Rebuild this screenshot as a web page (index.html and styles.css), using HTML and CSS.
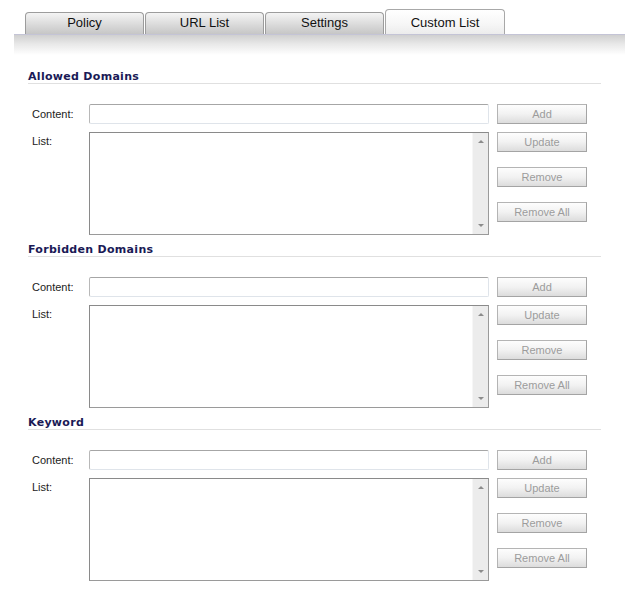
FILE: index.html
```html
<!doctype html>
<html lang="en">

<head>
    <meta charset="UTF-8">
    <title>Custom List</title>
    <link rel="stylesheet" href="styles.css">
</head>

<body>

    <div class="tabs">
        <div class="tab">Policy</div>
        <div class="tab">URL List</div>
        <div class="tab">Settings</div>
        <div class="tab active">Custom List</div>
    </div>
    <div class="band"></div>

    <div class="content">

        <div class="section">
            <h3 class="heading">Allowed Domains</h3>
            <div class="row">
                <label class="label mid">Content:</label>
                <div class="field"></div>
                <div class="side"><div class="btn">Add</div></div>
            </div>
            <div class="row list-row">
                <label class="label">List:</label>
                <div class="listbox">
                    <div class="list-area"></div>
                    <div class="scroll"><span class="arrow up"></span><span class="arrow down"></span></div>
                </div>
                <div class="side btns">
                    <div class="btn">Update</div>
                    <div class="btn">Remove</div>
                    <div class="btn">Remove All</div>
                </div>
            </div>
        </div>

        <div class="section">
            <h3 class="heading">Forbidden Domains</h3>
            <div class="row">
                <label class="label mid">Content:</label>
                <div class="field"></div>
                <div class="side"><div class="btn">Add</div></div>
            </div>
            <div class="row list-row">
                <label class="label">List:</label>
                <div class="listbox">
                    <div class="list-area"></div>
                    <div class="scroll"><span class="arrow up"></span><span class="arrow down"></span></div>
                </div>
                <div class="side btns">
                    <div class="btn">Update</div>
                    <div class="btn">Remove</div>
                    <div class="btn">Remove All</div>
                </div>
            </div>
        </div>

        <div class="section">
            <h3 class="heading">Keyword</h3>
            <div class="row">
                <label class="label mid">Content:</label>
                <div class="field"></div>
                <div class="side"><div class="btn">Add</div></div>
            </div>
            <div class="row list-row">
                <label class="label">List:</label>
                <div class="listbox">
                    <div class="list-area"></div>
                    <div class="scroll"><span class="arrow up"></span><span class="arrow down"></span></div>
                </div>
                <div class="side btns">
                    <div class="btn">Update</div>
                    <div class="btn">Remove</div>
                    <div class="btn">Remove All</div>
                </div>
            </div>
        </div>

    </div>

</body>

</html>
```

FILE: styles.css
```css
body {
    margin: 0;
    background: #fff;
    font-family: "Liberation Sans", Arial, sans-serif;
}

.tabs {
    display: flex;
    align-items: flex-end;
    gap: 1px;
    height: 34px;
    padding-left: 25px;
}

.tab {
    box-sizing: border-box;
    width: 119px;
    height: 22px;
    padding-bottom: 3px;
    line-height: 19px;
    font-size: 13px;
    text-align: center;
    color: #111;
    border: 1px solid #9c9c9c;
    border-bottom: none;
    border-radius: 4px 4px 0 0;
    background: linear-gradient(#f4f4f4, #d8d8d8 60%, #c6c6c6);
}

.tab.active {
    width: 120px;
    height: 25px;
    padding-top: 3px;
    border-color: #a8a8a8;
    background: linear-gradient(#ffffff, #f6f6f6 60%, #ececec);
}

.band {
    margin-left: 14px;
    height: 20px;
    border-top: 1px solid #c4c4d6;
    background: linear-gradient(#d0d0d0, #e8e8e8 45%, #ffffff);
}

.content {
    padding: 13px 0 0 28px;
    width: 573px;
}

.section {
    margin-bottom: 6px;
}

.heading {
    margin: 0 0 20px;
    padding-top: 2px;
    font-family: "DejaVu Sans", Verdana, sans-serif;
    font-size: 11px;
    font-weight: bold;
    letter-spacing: 0.3px;
    line-height: 13px;
    color: #1a1a56;
    border-bottom: 1px solid #e0e0e0;
}

.row {
    display: grid;
    grid-template-columns: 61px 400px 98px;
    height: 20px;
    margin-bottom: 8px;
}

.side {
    padding-left: 8px;
}

.list-row {
    height: 103px;
    margin-bottom: 0;
}

.label {
    padding: 2px 0 0 4px;
    font-size: 11px;
    line-height: 14px;
    color: #222;
}

.label.mid {
    padding-top: 0;
    align-self: center;
}

.field {
    box-sizing: border-box;
    height: 20px;
    border: 1px solid #dfe4ea;
    border-top-color: #a6a6a6;
    border-left-color: #b8b8b8;
    border-radius: 2px;
    background: #fff;
}

.listbox {
    box-sizing: border-box;
    display: flex;
    height: 103px;
    border: 1px solid #8a8a8a;
    border-right-color: #9a9a9a;
    border-bottom-color: #9a9a9a;
    background: #fff;
}

.list-area {
    flex: 1;
}

.scroll {
    display: flex;
    flex-direction: column;
    justify-content: space-between;
    align-items: center;
    width: 15px;
    padding: 7px 0 7px;
    border-left: 1px solid #f6f6f6;
    background: #ececec;
}

.arrow {
    width: 0;
    height: 0;
    border-left: 3px solid transparent;
    border-right: 3px solid transparent;
}

.arrow.up {
    border-bottom: 3px solid #8c8c8c;
}

.arrow.down {
    border-top: 3px solid #8c8c8c;
}

.btns {
    display: flex;
    flex-direction: column;
    gap: 15px;
}

.btn {
    box-sizing: border-box;
    height: 20px;
    line-height: 18px;
    font-size: 11px;
    text-align: center;
    color: #9c9c9c;
    border: 1px solid #a4a4a4;
    border-top-color: #b4b4b4;
    border-left-color: #b4b4b4;
    background: linear-gradient(#fdfdfd, #f2f2f2 50%, #dcdcdc);
}
```
